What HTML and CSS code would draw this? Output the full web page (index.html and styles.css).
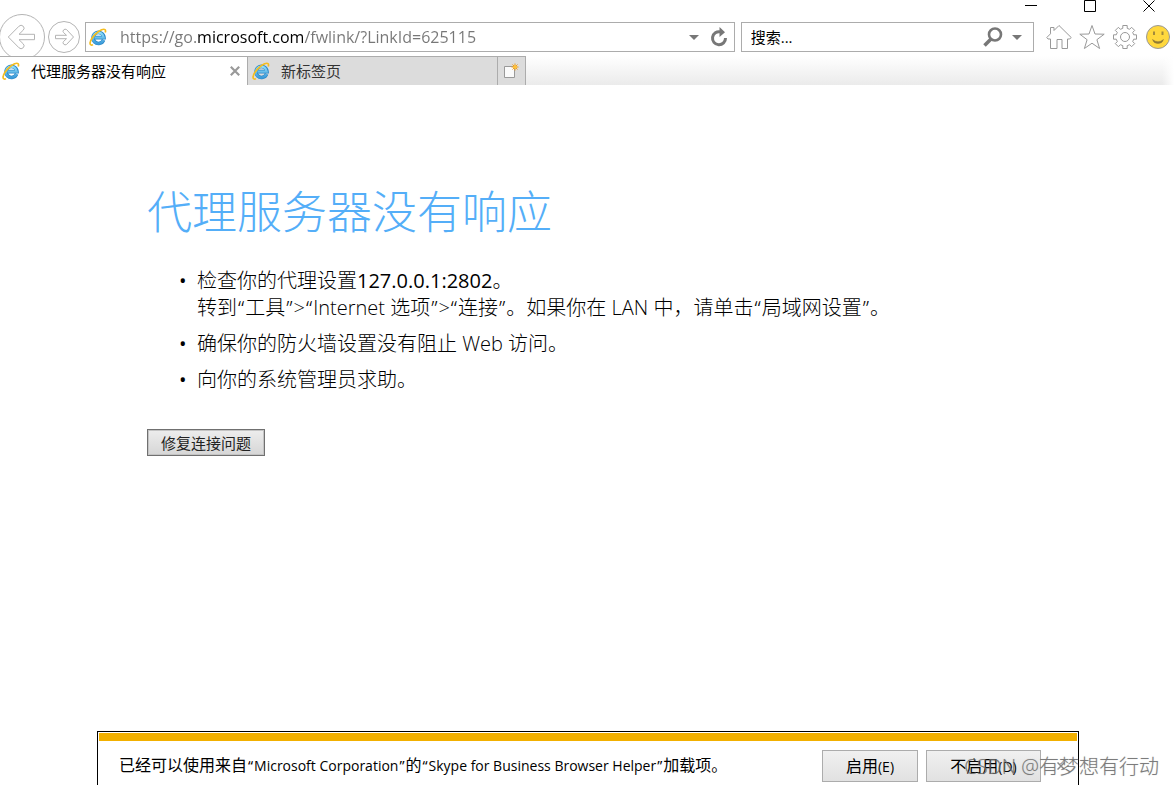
FILE: index.html
```html
<!DOCTYPE html>
<html lang="zh-CN">
<head>
<meta charset="utf-8">
<meta name="viewport" content="width=device-width, initial-scale=1">
<title>代理服务器没有响应</title>
<link rel="stylesheet" href="styles.css">
</head>
<body>
<svg class="defs" width="0" height="0" aria-hidden="true">
  <defs>
    <linearGradient id="blue" x1="0" y1="0" x2="0" y2="1">
      <stop offset="0" stop-color="#8fdcf8"/><stop offset="1" stop-color="#3a9bd9"/>
    </linearGradient>
    <symbol id="ie" viewBox="0 0 18 18">
      <path d="M14.600 12A5.500 5.500 0 1 1 15 9.600H5.500" fill="none" stroke="#2b88c8" stroke-width="3.600"/>
      <path d="M14.400 12A5.500 5.500 0 1 1 14.700 9.600H5.500" fill="none" stroke="url(#blue)" stroke-width="2.400"/>
      <path d="M4 16.700C1.600 17.700.5 16.400 1.400 13.600 2.600 9.500 7.800 3.800 12.600 1.800c3.200-1.300 4.600-.2 3.600 2.800" fill="none" stroke="#f5bd1f" stroke-width="1.700"/>
    </symbol>
  </defs>
</svg>

<header class="chrome">
  <div class="window-controls">
    <button aria-label="最小化"><svg width="12" height="12" viewBox="0 0 12 12"><path d="M0 5.500h12"/></svg></button>
    <button aria-label="最大化"><svg width="12" height="12" viewBox="0 0 12 12"><path d="M.5.5h11v11H.5z"/></svg></button>
    <button aria-label="关闭"><svg width="12" height="12" viewBox="0 0 12 12"><path d="M.5.5l11 11M11.500.5l-11 11"/></svg></button>
  </div>
  <div class="toolbar">
    <button class="back" aria-label="后退">
      <svg width="46" height="46" viewBox="0 0 46 46"><circle cx="22" cy="23" r="22.500"/><path d="M8.300 23 19 12.200q2-2 4.200 0 2 2 0 4L19 20.300h15.500v5.400H19l4.200 4.100q2 2 0 4-2.200 2-4.200 0z"/></svg>
    </button>
    <button class="forward" aria-label="前进">
      <svg width="32" height="32" viewBox="0 0 32 32"><circle cx="16" cy="16" r="15.500"/><path d="M25.500 16 18.500 8.500q-1.500-1-3 .5-1 1.500 0 2.500l3 2.800H7.500v3.400h11l-3 2.800q-1 1 0 2.500 1.500 1.500 3 .5z"/></svg>
    </button>
    <form class="field address">
      <svg width="18" height="18"><use href="#ie"/></svg>
      <input class="url" type="text" aria-label="地址" value="https://go.microsoft.com/fwlink/?LinkId=625115">
      <button type="button" aria-label="显示地址列表"><svg width="10" height="5" viewBox="0 0 10 5"><path d="M0 0h10L5 5z" fill="#777"/></svg></button>
      <button type="button" aria-label="刷新"><svg width="18" height="20" viewBox="0 0 18 20"><path d="M10.500 4.900A6.500 6.500 0 1 0 15.500 11" fill="none" stroke="#777" stroke-width="3"/><path d="M9.500 0 15 5.200 9.500 10z" fill="#777"/></svg></button>
    </form>
    <form class="field search">
      <input type="text" aria-label="搜索" placeholder="搜索...">
      <button type="button" aria-label="搜索"><svg width="20" height="20" viewBox="0 0 20 20" fill="none" stroke="#777"><circle cx="12" cy="7.500" r="6" stroke-width="2.600"/><path d="M8 12 1.500 18.500" stroke-width="3.600"/></svg></button>
      <button type="button" aria-label="搜索选项"><svg width="10" height="5" viewBox="0 0 10 5"><path d="M0 0h10L5 5z" fill="#777"/></svg></button>
    </form>
    <nav class="tools" aria-label="工具">
      <button aria-label="主页"><svg width="26" height="26" viewBox="0 0 26 26"><path d="M.8 13.500 4.500 9.800V3.500h3.500v3L13 1.500l12.200 12-1.500 1.500h-2.200v9.500h-5.500v-9h-5v9H4.500V15H2z"/></svg></button>
      <button aria-label="收藏夹"><svg width="26" height="26" viewBox="0 0 26 26"><path d="M13 1.500l3 8.500 9.200.2-7.300 5.500 2.700 8.800L13 19.200l-7.600 5.300 2.700-8.800L.8 10.200 10 10z"/></svg></button>
      <button aria-label="设置"><svg width="26" height="26" viewBox="0 0 26 26"><circle cx="13" cy="13" r="4.500"/><path d="M10.800 4.300V1.500h4.400v2.800l2.400 1 2-2 3.100 3.100-2 2 1 2.400h2.800v4.400h-2.800l-1 2.400 2 2-3.100 3.100-2-2-2.400 1v2.800h-4.400v-2.800l-2.400-1-2 2-3.100-3.100 2-2-1-2.400H1.500v-4.400h2.800l1-2.400-2-2 3.100-3.100 2 2z"/></svg></button>
      <button aria-label="发送反馈"><svg width="26" height="26" viewBox="0 0 26 26"><circle cx="13" cy="13" r="11.500" fill="#ffd83d" stroke="#999"/><path d="M9 7.500v3.500M17.500 7.500v3.500" stroke="#a38b3c" stroke-width="2"/><path d="M7.500 15.500q5.500 4.500 11 0-1 4-5.500 4t-5.500-4z" fill="#8e7935" stroke="#8e7935" stroke-width=".5"/></svg></button>
    </nav>
  </div>
</header>

<div class="tabs" role="tablist">
  <div class="tab active" role="tab" aria-selected="true">
    <svg width="18" height="18"><use href="#ie"/></svg>
    <span>代理服务器没有响应</span>
    <button aria-label="关闭标签页"><svg width="10" height="10" viewBox="0 0 10 10"><path d="M.8.8l8.400 8.400M9.200.8.8 9.200" stroke="#999" stroke-width="2.200"/></svg></button>
  </div>
  <div class="tab" role="tab" aria-selected="false">
    <svg width="18" height="18"><use href="#ie"/></svg>
    <span>新标签页</span>
  </div>
  <button class="new-tab" aria-label="新建标签页">
    <svg width="15" height="16" viewBox="0 0 15 16"><path d="M.5 3.500h10v11H.5z" fill="#fafafa" stroke="#999"/><path d="M11 .5v7M7.500 4h7M8.500 1.500l5 5M13.500 1.500l-5 5" stroke="#f09a1a"/><circle cx="11" cy="4" r="1.800" fill="#ffc233"/></svg>
  </button>
  <div class="strip"></div>
</div>

<main>
  <h1>代理服务器没有响应</h1>
  <ul>
    <li>检查你的代理设置<strong>127.0.0.1:2802</strong>。<br>转到<span class="quote">“</span>工具<span class="quote">”</span>&gt;<span class="quote">“</span>Internet 选项<span class="quote">”</span>&gt;<span class="quote">“</span>连接<span class="quote">”</span>。如果你在 LAN 中，请单击<span class="quote">“</span>局域网设置<span class="quote">”</span>。</li>
    <li>确保你的防火墙设置没有阻止 Web 访问。</li>
    <li>向你的系统管理员求助。</li>
  </ul>
  <button class="fix">修复连接问题</button>
</main>

<aside class="notice" aria-label="通知">
  <div class="stripe"></div>
  <div class="notice-row">
    <p>已经可以使用来自<span class="latin"><span class="quote">“</span>Microsoft Corporation<span class="quote">”</span></span>的<span class="latin"><span class="quote">“</span>Skype for Business Browser Helper<span class="quote">”</span></span>加载项。</p>
    <button class="enable">启用<span class="latin">(E)</span></button>
    <button class="disable">不启用<span class="latin">(D)</span></button>
    <button class="dismiss" aria-label="关闭通知"><svg width="8" height="8" viewBox="0 0 8 8"><path d="M.5.5l7 7M7.500.5l-7 7" stroke="#888" stroke-width="1.500"/></svg></button>
  </div>
</aside>
<div class="watermark">CSDN @有梦想有行动</div>
</body>
</html>
```
FILE: styles.css
```css
* { box-sizing: border-box; }
body {
  margin: 0;
  height: 100vh;
  display: flex;
  flex-direction: column;
  position: relative;
  overflow: hidden;
  background: #fff;
  color: #000;
  font: 15px/20px "Open Sans", "Noto Sans CJK SC", sans-serif;
}
button, input { font: inherit; color: inherit; }
button { padding: 0; border: 0; background: none; flex: none; }
svg { display: block; flex: none; }
.defs { position: absolute; }
.quote { padding: 0 1px; font-family: "Noto Sans", sans-serif; line-height: 1; }
.latin { font-size: 14px; }

.chrome { overflow: hidden; flex: none; }
.window-controls { display: flex; justify-content: flex-end; gap: 47px; padding-right: 19px; }
.window-controls svg { fill: none; stroke: #000; }
.toolbar { display: flex; align-items: center; padding: 10px 3px 4px 0; }
.back, .forward { height: 30px; display: flex; align-items: center; }
.back svg, .forward svg { fill: none; stroke: #b4b4b4; }
.forward { margin: 0 5px 0 2px; }
.field {
  display: flex;
  align-items: center;
  height: 30px;
  min-width: 0;
  border: 1px solid #acacac;
  background: #fff;
}
.field input { flex: 1; min-width: 0; border: 0; padding: 0; outline: 0; background: none; }
.address { flex: 638; padding: 0 6px 0 3px; margin-right: 6px; gap: 11px; }
.address .url {
  height: 24px;
  margin-left: 2px;
  font-size: 16px;
  background: linear-gradient(90deg, #777 77px, #000 77px 184px, #777 184px);
  -webkit-background-clip: text;
  background-clip: text;
  -webkit-text-fill-color: transparent;
}
.search { flex: 271; padding: 0 11px 0 9px; gap: 9px; }
.search input::placeholder { color: #000; opacity: 1; }
.tools { display: flex; gap: 7px; margin-left: 12px; }
.tools svg { fill: none; stroke: #999; }

.tabs { display: flex; flex: none; height: 29px; }
.tab {
  width: 250px;
  display: flex;
  align-items: center;
  gap: 11px;
  padding: 0 7px 0 4px;
  border: solid #acacac;
  border-width: 1px 1px 0 0;
  background: #dcdcdc;
  color: #333;
}
.tab.active { width: 248px; padding-left: 2px; background: #fff; color: #000; }
.tab span { flex: 1; }
.new-tab {
  width: 28px;
  display: grid;
  place-items: center;
  border: solid #acacac;
  border-width: 1px 1px 0 0;
  background: #dcdcdc;
}
.strip {
  flex: 1;
  background: linear-gradient(270deg, #fff, transparent 12px), linear-gradient(#fff, #ebebeb);
}

main { flex: 1; padding: 97px 147px 0; font-weight: 300; }
h1 { margin: 0 0 25px; font-size: 45px; line-height: 60px; font-weight: 300; color: #54aef8; }
ul { margin: 0 0 36px; padding-left: 50px; list-style: none; font-size: 20px; line-height: 27px; }
li { margin-bottom: 9px; }
li:last-child { margin-bottom: 0; }
li::before { content: "•"; float: left; margin-left: -18px; font-size: 20px; font-weight: 400; }
strong { font-weight: 400; }
.fix {
  height: 27px;
  padding: 0 13px;
  border: 1px solid #707070;
  box-shadow: inset 0 0 0 1px #c4c4c4;
  background: linear-gradient(#ededed, #d6d6d6);
  color: #222;
  font-weight: 400;
}

.notice {
  flex: none;
  margin: 0 95px 0 97px;
  padding: 1px 1px 0;
  border: solid #000;
  border-width: 1px 1px 0;
  background: #fff;
}
.stripe { height: 8px; background: #f2b000; }
.notice-row { display: flex; align-items: center; gap: 8px; padding: 9px 12px 3px 20px; font-size: 16px; }
.notice p { flex: 1; margin: 0; padding-bottom: 2px; }
.enable, .disable { height: 32px; border: 1px solid #acacac; background: linear-gradient(#f0f0f0, #e1e1e1); }
.enable { width: 96px; }
.disable { width: 115px; }
.dismiss { margin-left: 8px; }
.watermark {
  position: absolute;
  right: 15px;
  bottom: 5px;
  font-size: 20px;
  line-height: 26px;
  font-weight: 300;
  color: #666c;
  text-shadow: 0 0 1px #8888;
  pointer-events: none;
}
```
